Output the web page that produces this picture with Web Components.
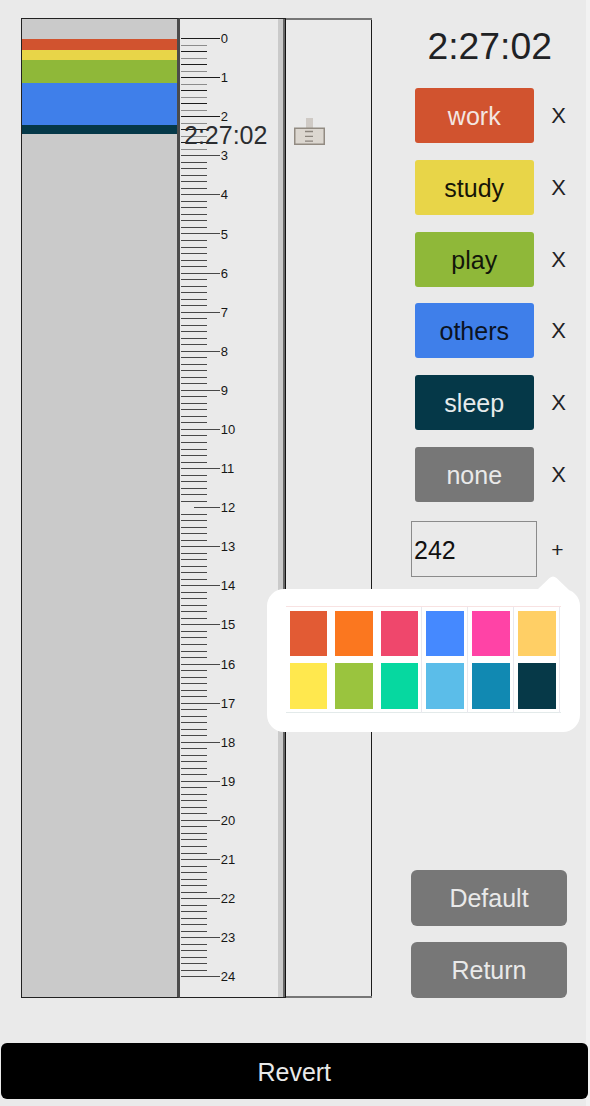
<!DOCTYPE html>
<html lang="en">
<head>
<meta charset="utf-8">
<title>Time tracker</title>
<style>
body{margin:0;background:#eaeaea;font-family:"Liberation Sans",Arial,sans-serif;color:#1f2225;overflow:hidden}
</style>
</head>
<body>
<tracker-app></tracker-app>
<script>
const define = (name, html, setup) => customElements.define(name, class extends HTMLElement {
  connectedCallback() {
    if (this.shadowRoot) return;
    const t = document.createElement('template');
    t.innerHTML = html;
    this.attachShadow({mode: 'open'}).append(t.content.cloneNode(true));
    if (setup) setup(this, this.shadowRoot);
  }
});

define('day-bands', `<style>
:host{display:block;box-sizing:border-box;width:159px;height:980px;background:#cacaca;border:1px solid #222;border-right:3px solid #4b4b4b;padding-top:20px}
div{width:100%}
</style>`, (el, root) => {
  for (const [c, h] of [['#d1532f', 11], ['#e8d548', 10.3], ['#8fb839', 22.7], ['#3f7fea', 42.5], ['#053848', 8.5]]) {
    const d = document.createElement('div');
    d.style.background = c; d.style.height = h + 'px';
    root.append(d);
  }
});

define('hour-ruler', `<style>
:host{display:block;position:relative;box-sizing:border-box;width:106px;height:980px;border-top:1px solid #222;border-bottom:1px solid #222;
 background:linear-gradient(90deg,transparent 98px,#cacaca 98px,#cacaca 103px,#666 103px,#666 105px,#111 105px)}
svg{display:block;margin-top:-1px;font-size:13px;fill:#161616}
span{position:absolute;left:4px;top:101px;font-size:25px;line-height:30px;color:#2b2d30}
</style><svg width="106" height="979"></svg><span><slot></slot></span>`, (el, root) => {
  let s = '';
  for (let i = 0; i <= 144; i++) {
    const y = 20 + i * 6.516, yr = Math.round(y), h = i / 6;
    const major = i % 6 === 0;
    const c = i % 2 && i < 18 ? '#8c8c8c' : i < 18 ? '#1c1c1c' : '#484848';
    s += `<path d="M${i === 72 ? 14 : 1} ${yr + .5}H${major ? 40 : 27}" stroke="${c}"/>`;
    if (major) s += `<text x="40.8" y="${(y + 5).toFixed(1)}">${h}</text>`;
  }
  root.querySelector('svg').innerHTML = s;
});

define('slider-track', `<style>
:host{display:block;box-sizing:border-box;width:86px;height:980px;border:solid #777;border-width:2px 0;box-shadow:inset -1px 0 #1c1c1c;padding:98px 0 0 8px}
svg{display:block}
</style><svg width="31" height="30" viewBox="0 0 31 30"><path d="M12 0h7v10h-7z" fill="#cfcac5"/><path d="M.75 10.25h29.5v16h-29.5z" fill="#dcd7d0" stroke="#928b82" stroke-width="1.5"/><path d="M11 13.5h8M11 18.3h8M11 23.2h8" stroke="#8a847c" stroke-width="1.3"/></svg>`);

define('activity-row', `<style>
:host{display:flex;height:55px;align-items:center}
div{flex:none;width:118.5px;height:55px;line-height:56px;border-radius:3px;text-align:center;font-size:25px;background:var(--bg);color:var(--fg)}
b{flex:none;font-weight:400;font-size:22px;width:50px;text-align:center;line-height:57px}
</style><div><slot></slot></div><b>X</b>`);

define('new-activity', `<style>
:host{display:flex;height:56px}
div{box-sizing:border-box;width:126px;height:56px;border:1px solid #8b8b8b;font-size:25px;line-height:56px;padding-left:2px;color:#111}
b{font-weight:400;font-size:21px;width:41px;text-align:center;line-height:57px}
</style><div><slot></slot></div><b>+</b>`);

define('app-button', `<style>
:host{display:block;box-sizing:border-box;height:56px;line-height:57px;border-radius:6px;text-align:center;font-size:25px;background:var(--bg,#777);color:#e9e9e9}
</style><slot></slot>`);

define('color-popover', `<style>
:host{display:block;position:absolute;left:267px;top:589px;box-sizing:border-box;width:313px;height:142.5px;border-radius:17px;background:#fff;padding:17px 19px}
.tip{position:absolute;left:270px;top:-13px}
.grid{display:grid;grid-template-columns:45px 46px 45px 46px 46px 46px;grid-template-rows:52.5px 53px;border-top:1px solid #f8e2e2;border-bottom:1px solid #e3eaea;box-sizing:border-box;height:107px}
i{box-sizing:border-box;padding:3.5px 3px 3px 4px;border-right:1px solid #e8e8ee}
i:nth-child(6n+1),i:nth-child(6n+2){border-color:transparent}
i::before{content:"";display:block;height:45px;background:var(--c)}
i:nth-child(n+7)::before{height:46px}
</style><svg class="tip" width="32" height="14"><path d="M0 14 12.5 2Q16 -1 19.5 2L32 14z" fill="#fff"/></svg><div class="grid"></div>`, (el, root) => {
  root.querySelector('.grid').innerHTML = ['#e25b34', '#fb771f', '#ef476c', '#4589ff', '#ff43a6', '#ffcf65', '#ffe84e', '#9ac43e', '#06d8a0', '#5bbde9', '#1189b2', '#063948']
    .map(c => `<i style="--c:${c}"></i>`).join('');
});

define('tracker-app', `<style>
:host{display:flex;flex-direction:column;position:relative;box-sizing:border-box;width:590px;height:1106px;padding:18px 2.5px 7px 1px;background:linear-gradient(90deg,#eaeaea 586.5px,#f2f2f2 586.5px)}
main{display:flex;height:980px;padding-left:20px}
aside{width:167px;margin-left:39px;display:flex;flex-direction:column}
.clock{font-size:37.3px;line-height:42px;margin:7px 0 0 16.5px;height:42px;white-space:nowrap}
.list{display:flex;flex-direction:column;gap:16.8px;margin:21px 0 19.5px 4px}
.actions{display:flex;flex-direction:column;gap:16.5px;width:156px;margin-top:auto}
.revert{--bg:#000;margin-top:45px;line-height:59px}
</style>
<main>
<day-bands></day-bands><hour-ruler>2:27:02</hour-ruler><slider-track></slider-track>
<aside>
<div class="clock">2:27:02</div>
<div class="list">
<activity-row style="--bg:#d1532f;--fg:#f3e6e2">work</activity-row>
<activity-row style="--bg:#e8d548;--fg:#171507">study</activity-row>
<activity-row style="--bg:#8fb839;--fg:#12160a">play</activity-row>
<activity-row style="--bg:#3f7fea;--fg:#0b1322">others</activity-row>
<activity-row style="--bg:#053848;--fg:#e6ebec">sleep</activity-row>
<activity-row style="--bg:#777;--fg:#e9e9e9">none</activity-row>
</div>
<new-activity>242</new-activity>
<div class="actions"><app-button>Default</app-button><app-button>Return</app-button></div>
</aside>
</main>
<app-button class="revert">Revert</app-button>
<color-popover></color-popover>`);
</script>
</body>
</html>
